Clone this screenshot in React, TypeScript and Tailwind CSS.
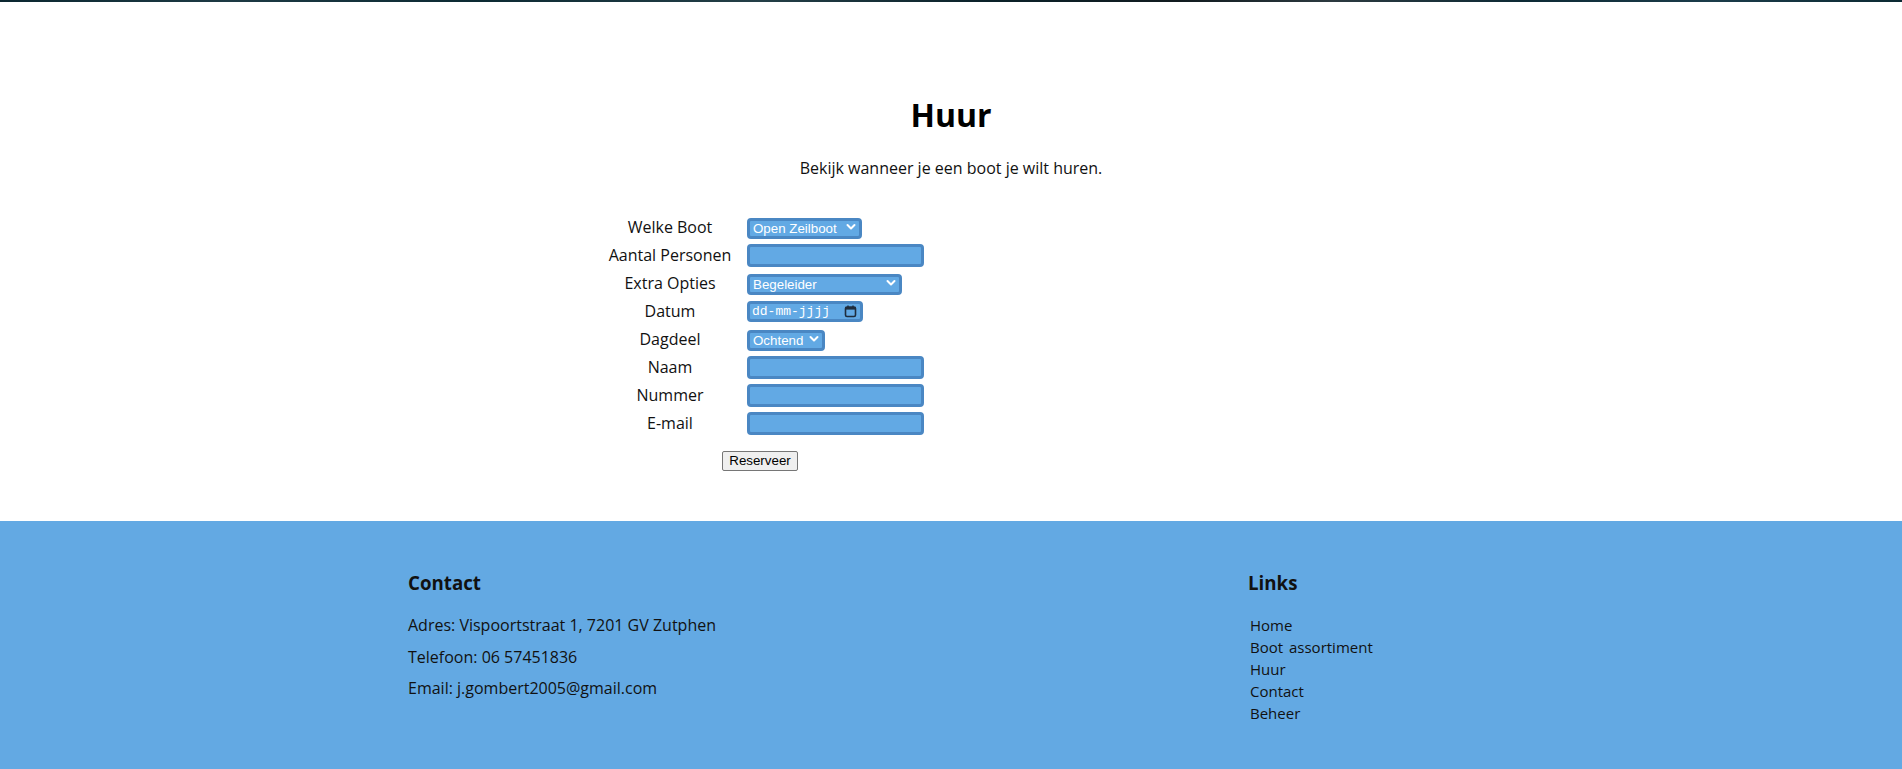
import React from "react";

const fieldBox =
  "h-[21px] rounded-[4px] border-[3px] border-[#4a87c3] bg-[#62a9e4] text-white text-[13.33px] [font-family:'Liberation_Sans',Arial,sans-serif] outline-none";

function Chevron() {
  return (
    <svg
      className="pointer-events-none absolute right-[6px] top-1/2 -translate-y-1/2"
      width="10"
      height="7"
      viewBox="0 0 10 7"
      fill="none"
    >
      <path d="M1.5 1.5 L5 5 L8.5 1.5" stroke="white" strokeWidth="2" strokeLinecap="round" strokeLinejoin="round" />
    </svg>
  );
}

function Select({ width, options }: { width: string; options: string[] }) {
  return (
    <div className={`relative ${width}`}>
      <select
        className={`${fieldBox} w-full appearance-none pl-[3px] pr-[18px] leading-[15px]`}
        defaultValue={options[0]}
      >
        {options.map((o) => (
          <option key={o} className="bg-white text-black">
            {o}
          </option>
        ))}
      </select>
      <Chevron />
    </div>
  );
}

function TextField() {
  return (
    <input
      type="text"
      className="h-[23px] w-[177px] rounded-[4px] border-[3px] border-[#4a87c3] bg-[#62a9e4] px-[3px] text-[13.33px] text-white outline-none"
    />
  );
}

function DateField() {
  return (
    <div className={`${fieldBox} flex w-[116px] items-center justify-between pl-[2px] pr-[3px]`}>
      <span className="text-[13px] leading-none [font-family:'Liberation_Mono',monospace]">dd-mm-jjjj</span>
      <svg width="13" height="13" viewBox="0 0 13 13" fill="none">
        <rect x="1.5" y="2" width="10" height="9.5" rx="1.5" stroke="#1f2d3d" strokeWidth="1.6" />
        <rect x="1.5" y="2" width="10" height="2.6" fill="#1f2d3d" />
        <line x1="4" y1="0.5" x2="4" y2="2.5" stroke="#1f2d3d" strokeWidth="1.4" />
        <line x1="9" y1="0.5" x2="9" y2="2.5" stroke="#1f2d3d" strokeWidth="1.4" />
      </svg>
    </div>
  );
}

const rows: { label: string; field: React.ReactNode }[] = [
  { label: "Welke Boot", field: <Select width="w-[115px]" options={["Open Zeilboot", "Kajuitzeilboot", "Sloep"]} /> },
  { label: "Aantal Personen", field: <TextField /> },
  { label: "Extra Opties", field: <Select width="w-[155px]" options={["Begeleider", "Geen"]} /> },
  { label: "Datum", field: <DateField /> },
  { label: "Dagdeel", field: <Select width="w-[78px]" options={["Ochtend", "Middag"]} /> },
  { label: "Naam", field: <TextField /> },
  { label: "Nummer", field: <TextField /> },
  { label: "E-mail", field: <TextField /> },
];

const links = ["Home", "Boot assortiment", "Huur", "Contact", "Beheer"];

export default function App() {
  return (
    <div className="min-h-screen bg-white text-[#111] [font-family:'Open_Sans',sans-serif]">
      {/* thin strip of the header photo */}
      <div className="h-[2px] w-full bg-[linear-gradient(90deg,#0b2730_0%,#1d3a44_12%,#0c2a33_25%,#243f47_40%,#0a2129_52%,#111b1f_62%,#2c3a40_70%,#0d2a35_80%,#1b3c4a_90%,#0c2a33_100%)]" />

      <main className="pb-[50px] pt-[91px]">
        <div className="flex flex-col items-center">
          <h1 className="m-0 text-[32px] font-bold leading-[44px] text-black">Huur</h1>
          <p className="mt-[20px] text-[16px] leading-[22px]">Bekijk wanneer je een boot je wilt huren.</p>
        </div>

        <form className="ml-[605px] mt-[34px] w-[319px]" onSubmit={(e) => e.preventDefault()}>
          <div className="flex flex-col">
            {rows.map((r) => (
              <div key={r.label} className="flex h-[28px] items-center">
                <label className="w-[130px] text-center text-[16px] leading-[22px]">{r.label}</label>
                <div className="ml-[12px]">{r.field}</div>
              </div>
            ))}
          </div>
          <button
            type="submit"
            className="ml-[117px] mt-[14px] h-[20px] w-[76px] rounded-[2px] border border-[#767676] bg-[#efefef] text-[13.33px] leading-none text-black [font-family:'Liberation_Sans',Arial,sans-serif]"
          >
            Reserveer
          </button>
        </form>
      </main>

      <footer className="min-h-[248px] bg-[#63a9e3] pb-[40px] pt-[49px]">
        <div className="mx-auto flex w-[1090px] justify-between pl-[2px]">
          <div>
            <h3 className="text-[18.72px] font-bold leading-[25px]">Contact</h3>
            <div className="mt-[19px] flex flex-col gap-[9.5px] text-[16px] leading-[22px]">
              <p>Adres: Vispoortstraat 1, 7201 GV Zutphen</p>
              <p>Telefoon: 06 57451836</p>
              <p>Email: j.gombert2005@gmail.com</p>
            </div>
          </div>
          <div className="w-[248px]">
            <h3 className="text-[18.72px] font-bold leading-[25px]">Links</h3>
            <ul className="ml-[2px] mt-[19px] flex flex-col text-[15px] leading-[22px] [word-spacing:2px]">
              {links.map((l) => (
                <li key={l}>
                  <a href="#" className="text-[#111] no-underline">
                    {l}
                  </a>
                </li>
              ))}
            </ul>
          </div>
        </div>
      </footer>
    </div>
  );
}
